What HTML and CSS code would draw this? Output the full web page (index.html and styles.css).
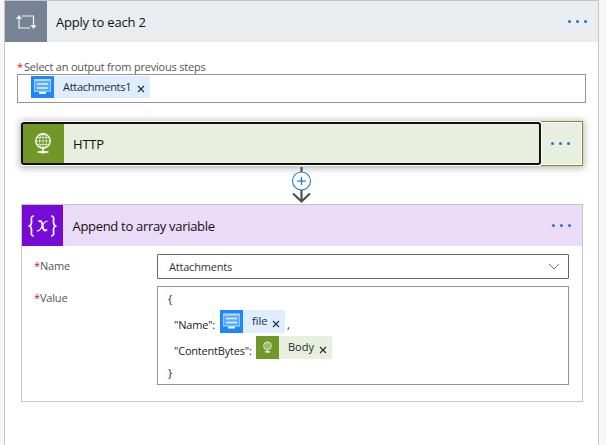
FILE: index.html
```html
<!DOCTYPE html>
<html lang="en">
<head>
<meta charset="utf-8">
<title>Apply to each 2</title>
<link rel="stylesheet" href="styles.css">
</head>
<body>
<svg class="defs" width="0" height="0" aria-hidden="true">
  <symbol id="globe" viewBox="0 0 20 24">
    <g fill="none" stroke="#fff">
      <circle cx="10" cy="9" r="7.2" stroke-width="1.4"/>
      <ellipse cx="10" cy="9" rx="3.4" ry="7.2" stroke-width=".7"/>
      <path d="M10 2v14M3 9h14M4.200 5.500h11.600M4.200 12.500h11.600" stroke-width=".6"/>
      <path d="M10 16.500v5M4.500 20h11" stroke-width="1.400"/>
      <path d="M7.500 19h5v2.200h-5z" fill="#fff" stroke="none"/>
    </g>
  </symbol>
  <symbol id="form" viewBox="0 0 23 22">
    <rect width="23" height="22" fill="#1e88fb"/>
    <rect x="3" y="3" width="17" height="13" rx="1" fill="#5aabff"/>
    <path d="M3 4h17" stroke="#b5d9ff" stroke-width="2"/>
    <path d="M6 8h11M6 12h11" stroke="#e5f2ff" stroke-width="1.600"/>
    <path d="M3.500 4v12M19.500 4v12M3 15.500h17" stroke="#9dcdff"/>
    <path d="M8 17h7" stroke="#fff" stroke-width="2"/>
  </symbol>
  <symbol id="close" viewBox="0 0 8 8">
    <path d="M1 1l6 6M7 1L1 7" stroke="#1f2f3a" stroke-width="1.100" fill="none"/>
  </symbol>
</svg>
<main class="scope">
  <header class="head head-scope">
    <span class="icon icon-loop">
      <svg width="22" height="16" viewBox="0 0 22 16" fill="none" stroke="#f2f4f6" stroke-width="1.200">
        <path d="M15 14H4V3M7 2h11.500v11"/>
        <path d="M1.500 4.500L4 1.500l2.500 3zM16 11.500l2.500 3 2.500-3z" fill="#f2f4f6" stroke-width=".7"/>
      </svg>
    </span>
    <h1 class="title t-scope">Apply to each 2</h1>
    <span class="dots"><i></i><i></i><i></i></span>
  </header>
  <section class="source">
    <label class="label"><b>*</b><span class="t-select">Select an output from previous steps</span></label>
    <div class="input">
      <span class="token blue t-one"><svg class="chip"><use href="#form"/></svg><span class="tx-att">Attachments1</span><svg class="x"><use href="#close"/></svg></span>
    </div>
  </section>
  <section class="http">
    <div class="http-main">
      <span class="icon icon-http"><svg width="20" height="24"><use href="#globe"/></svg></span>
      <h2 class="title t-http">HTTP</h2>
    </div>
    <div class="http-menu"><span class="dots"><i></i><i></i><i></i></span></div>
  </section>
  <div class="connector">
    <svg width="22" height="38" viewBox="0 0 22 38" fill="none">
      <path d="M11.500 1v35M3 27.500l8.500 8 8.500-8" stroke="#505050" stroke-width="2.200"/>
      <circle cx="11.500" cy="15" r="9" fill="#fff" stroke="#1a7fd6" stroke-width="1.100"/>
      <path d="M7 15h9" stroke="#5ba3e2" stroke-width="1.600"/>
      <path d="M11.500 11v8" stroke="#0f74d0" stroke-width="1.200"/>
    </svg>
  </div>
  <section class="append">
    <header class="head head-append">
      <span class="icon icon-var">
        <svg width="31" height="22" viewBox="0 0 31 22" fill="none" stroke="#fff" stroke-width="1.700">
          <path d="M7 1C3.500 1 4.500 4 4.500 7c0 2.500-1 4-3 4 2 0 3 1.500 3 4 0 3-1 6 2.500 6M24 1c3.500 0 2.500 3 2.500 6 0 2.500 1 4 3 4-2 0-3 1.500-3 4 0 3 1 6-2.500 6"/>
          <path d="M11.500 6.500c3-1.500 3.500 1 4 4s1.500 7 4.500 4" stroke-width="1.900"/>
          <path d="M20.500 6.500c-2-1-3.500 1-5 4s-3.500 6.500-5.500 5" stroke-width="1.200"/>
        </svg>
      </span>
      <h2 class="title t-append">Append to array variable</h2>
      <span class="dots"><i></i><i></i><i></i></span>
    </header>
    <div class="fields">
      <label class="label"><b>*</b><span class="t-name">Name</span></label>
      <div class="select"><span class="t-sel">Attachments</span>
        <svg width="12" height="7" viewBox="0 0 12 7" fill="none" stroke="#777"><path d="M1 1l5 5 5-5"/></svg>
      </div>
      <label class="label"><b>*</b><span class="t-value">Value</span></label>
      <div class="area">
        <div class="line l1">{</div>
        <div class="line l2"><span class="k-name">"Name":</span><span class="token blue t-two"><svg class="chip"><use href="#form"/></svg><span class="tx-file">file</span><svg class="x"><use href="#close"/></svg></span><span class="comma">,</span></div>
        <div class="line l3"><span class="k-bytes">"ContentBytes":</span><span class="token green t-three"><span class="chip chip-green"><svg width="11" height="13"><use href="#globe"/></svg></span><span class="tx-body">Body</span><svg class="x"><use href="#close"/></svg></span></div>
        <div class="line l4">}</div>
      </div>
    </div>
  </section>
</main>
</body>
</html>
```
FILE: styles.css
```css
* { box-sizing: border-box; }
body {
  margin: 0;
  height: 445px;
  overflow: hidden;
  background: #f7f7f7;
  font-family: "Open Sans", "Noto Sans", sans-serif;
  font-size: 11px;
  letter-spacing: -.2px;
  color: #222;
}
.defs { position: absolute; }
svg { display: block; flex: none; }
.scope {
  width: 595px;
  height: 460px;
  margin-left: 4px;
  background: #fff;
  border: 1px solid #c6c6c6;
}
.head { display: flex; align-items: center; height: 41px; }
.head-scope { background: #e9edf0; padding-right: 11px; }
.head-append { background: #eadbf7; padding-right: 11px; }
.icon {
  display: flex;
  flex: none;
  align-items: center;
  justify-content: center;
  width: 42px;
  height: 41px;
}
.icon-loop { background: #768394; }
.icon-http { width: 41px; height: 39px; padding-right: 2px; background: #709727; }
.icon-var { width: 41px; background: #770bd6; }
.title {
  margin: 0 0 0 9px;
  font-size: 13px;
  line-height: 20px;
  font-weight: 400;
  color: #111;
  white-space: nowrap;
}
.t-append { margin-left: 9.5px; letter-spacing: -.31px; }
.dots { display: flex; gap: 5px; margin-left: auto; }
.dots i { width: 3px; height: 3px; border-radius: 1.5px; background: #1b74d8; }
.source { padding: 18px 12px 0; }
.label {
  display: flex;
  gap: 3px;
  line-height: 14px;
  color: #555;
  white-space: nowrap;
}
.label b { font-weight: 400; color: #d8102c; width: 4px; }
.t-name, .t-value { margin-left: -1px; }
.input {
  display: flex;
  width: 569px;
  height: 29px;
  padding: 1px 13px;
  border: 1px solid #949494;
}
.token {
  display: flex;
  flex: none;
  align-items: center;
  height: 22px;
  line-height: 20px;
  white-space: nowrap;
  color: #1c2a38;
}
.blue { background: #deedff; }
.green { background: #e8efdf; }
.chip { width: 23px; height: 100%; background: #1e88fb; }
.chip-green {
  display: flex;
  align-items: center;
  justify-content: center;
  background: #709727;
}
.token .x { width: 8px; height: 8px; margin: 4px 5px 0 auto; }
.t-one { width: 119px; }
.t-two { width: 65px; height: 23px; }
.t-three { width: 76px; height: 23px; }
.tx-att, .tx-file, .tx-body { margin-left: 9px; }
.tx-att { letter-spacing: -.27px; }
.tx-file, .tx-body { padding-bottom: 1px; letter-spacing: 0; }
.http {
  display: flex;
  width: 562px;
  height: 45px;
  margin: 18px 0 0 16px;
  box-shadow: 0 1px 7px 1px rgba(0, 0, 0, .3);
  background: #fff;
}
.http-main {
  display: flex;
  align-items: center;
  width: 520px;
  height: 43px;
  margin-top: 1px;
  border: 2px solid #111;
  border-radius: 3px;
  background: #e8efdf;
}
.http-menu {
  display: flex;
  align-items: center;
  width: 42px;
  padding: 0 12px 1px 0;
  border: 1px solid #709727;
  border-left: 0;
  background: #e8efdf;
  box-shadow: inset 0 0 0 1px #fff;
}
.connector { display: flex; height: 38px; padding-left: 285px; }
.append {
  width: 562px;
  height: 198px;
  margin-left: 16px;
  border: 1px solid #c6c6c6;
}
.fields {
  display: grid;
  grid-template-columns: 123px 412px;
  grid-template-rows: 25px 99px;
  row-gap: 7px;
  padding: 8px 0 0 12px;
}
.fields .label { padding-top: 5px; }
.select {
  display: flex;
  align-items: center;
  justify-content: space-between;
  padding: 0 8px 0 11px;
  border: 1px solid #666;
  border-radius: 1px;
  color: #333;
}
.area { padding: 2px 0 0 10px; border: 1px solid #949494; }
.line { display: flex; line-height: 20px; height: 21px; white-space: pre; }
.l2, .l3 { height: 26px; padding-left: 6px; }
.l4 { padding-top: 1px; }
.k-name { width: 46px; padding-top: 5px; }
.k-bytes { width: 82px; padding-top: 5px; }
.comma { padding: 5px 0 0 2px; }
```
